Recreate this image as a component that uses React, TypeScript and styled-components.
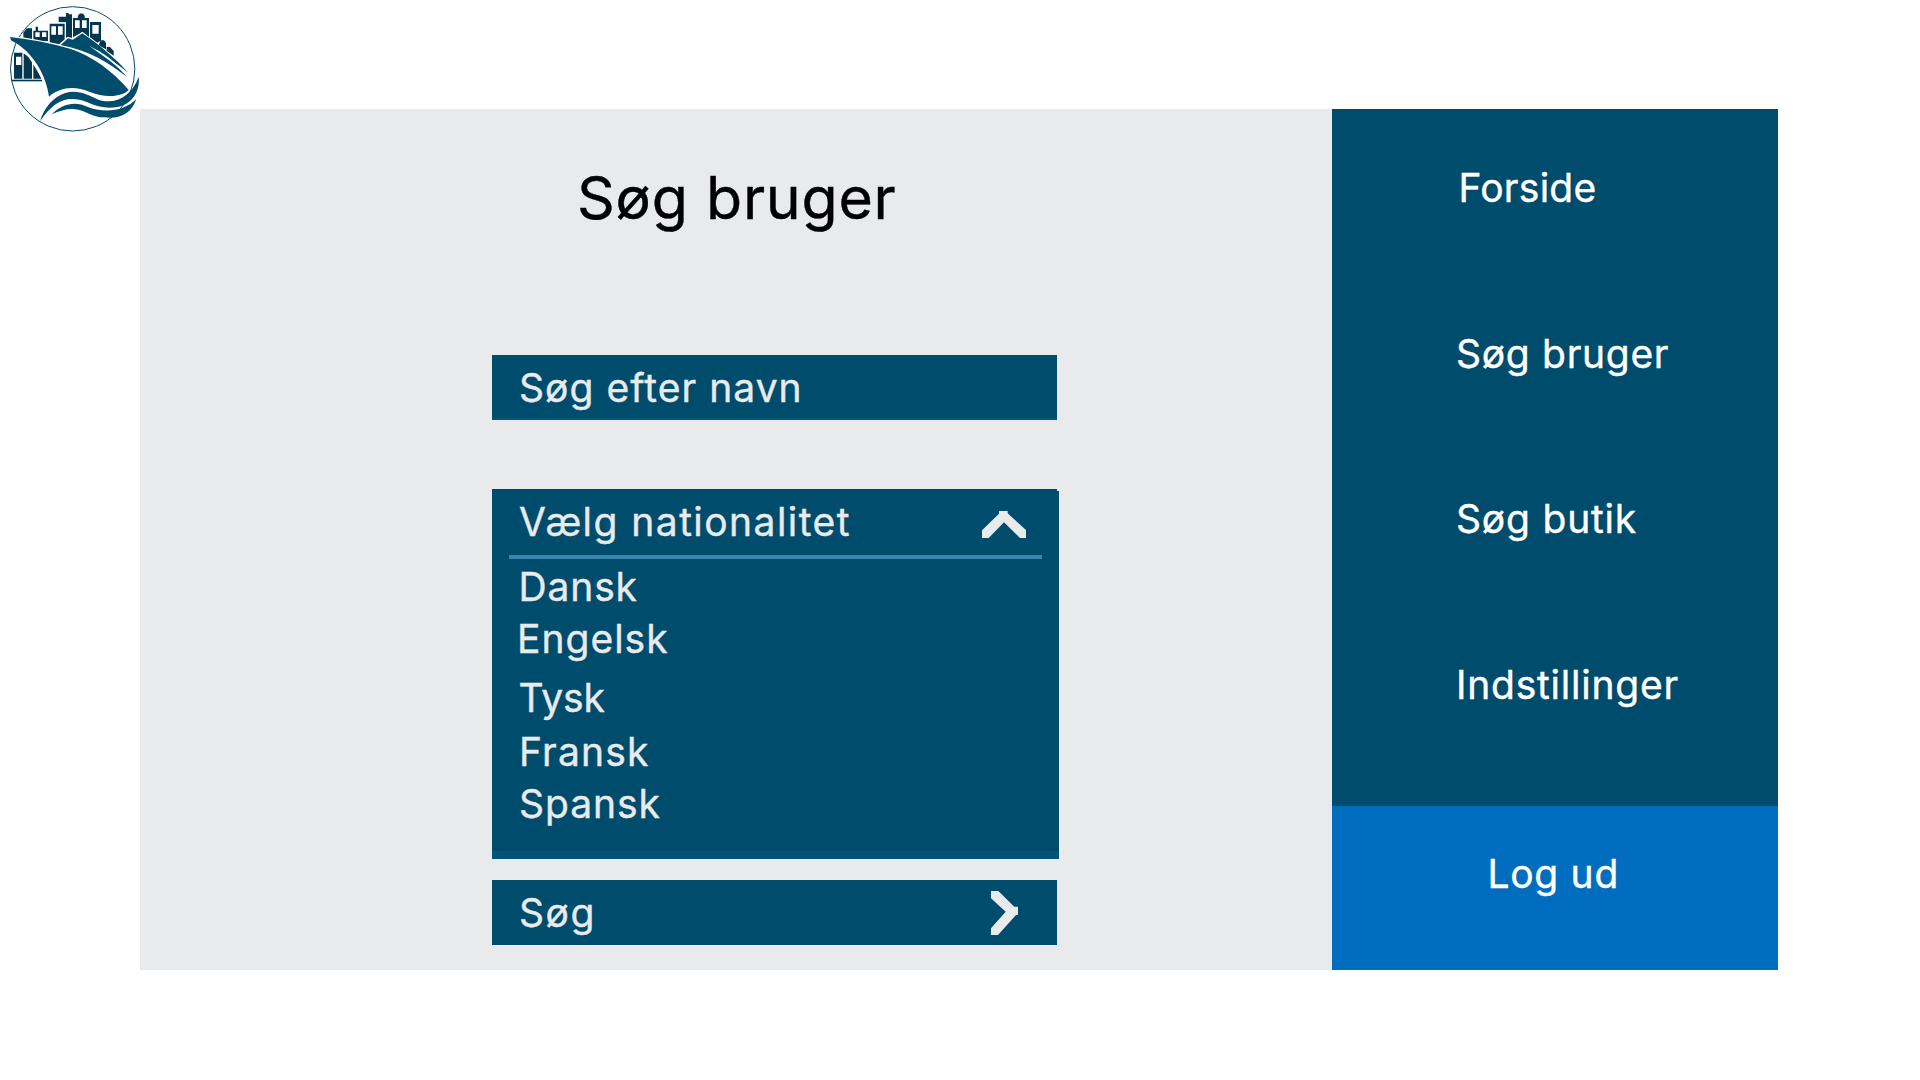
import React from 'react';
import styled, { createGlobalStyle } from 'styled-components';

const NAVY = '#004c6d';
const DARK = '#04364f';
const PALE = '#e8eaec';

const Global = createGlobalStyle`
  html, body { margin: 0; background: #fff; }
  body {
    font-family: Inter, "Liberation Sans", sans-serif;
    font-size: 39px;
    overflow: hidden;
    -webkit-text-stroke: 0.4px currentColor;
  }
`;

const Page = styled.div`
  display: grid;
  grid-template-columns: 140px 1638px;
  grid-template-rows: 109px 861px;
  width: 1920px;
  height: 1080px;
`;

const LogoCell = styled.header`
  grid-row: 1 / span 2;
`;

const Frame = styled.div`
  grid-column: 2;
  grid-row: 2;
  display: flex;
`;

const Main = styled.main`
  width: 1192px;
  box-sizing: border-box;
  padding: 49px 0 0 352px;
  background: ${PALE};
`;

const Spaced = styled.span<{ $ls: number }>`
  letter-spacing: ${p => p.$ls}px;
  white-space: nowrap;
`;

const Title = styled.h1`
  margin: 0 0 117px 85px;
  font-size: 59px;
  line-height: 80px;
  font-weight: 400;
  color: #000;
`;

const Bar = styled.div`
  display: flex;
  align-items: center;
  width: 565px;
  height: 65px;
  box-sizing: border-box;
  padding-left: 27px;
  background: ${NAVY};
  color: ${PALE};
  line-height: 65px;
`;

const SearchField = styled(Bar)`
  margin-bottom: 69px;
  box-shadow: inset 0 -2px #07567a;
`;

const SubmitBar = styled(Bar)`
  justify-content: space-between;
  padding-right: 39px;
`;

const Dropdown = styled.section`
  display: flex;
  flex-direction: column;
  width: 567px;
  height: 370px;
  margin-bottom: 21px;
  background: linear-gradient(${PALE}, ${PALE}) top right / 2px 2px no-repeat ${NAVY};
  color: ${PALE};
`;

const DropdownHead = styled.div`
  display: flex;
  justify-content: space-between;
  height: 66px;
  padding: 0 33px 0 27px;
  line-height: 66px;
`;

const Divider = styled.div`
  height: 4px;
  margin: 0 17px;
  background: #3a86ae;
`;

const Options = styled.ul`
  flex: 1;
  margin: 0;
  padding: 3px 0 0 27px;
  list-style: none;
  border-bottom: 8px solid #045475;
`;

const Option = styled.li<{ $gap: number; $shift?: number }>`
  margin: ${p => p.$gap}px 0 0 ${p => p.$shift ?? 0}px;
  line-height: 50px;
`;

const UpIcon = styled.svg`
  margin-top: 22px;
`;

const Sidebar = styled.nav`
  display: flex;
  flex-direction: column;
  width: 446px;
  background: ${NAVY};
  color: #fff;
`;

const NavItem = styled.a<{ $left: number }>`
  height: 165.7px;
  box-sizing: border-box;
  padding: 54px 0 0 ${p => p.$left}px;
  line-height: 50px;
`;

const Logout = styled.a`
  height: 164px;
  margin-top: auto;
  box-sizing: border-box;
  padding: 43px 0 0 155.5px;
  background: #006dbf;
  line-height: 50px;
`;

function Logo() {
  return (
    <svg width="140" height="140" viewBox="0 0 420 420" aria-hidden="true">
      <circle cx="218" cy="206.500" r="186.500" fill="none" stroke={NAVY} strokeWidth="3" />
      <g fill={DARK}>
        <path d="M70 118V98L80 85H96V118Z" />
        <path d="M100 118V92H107V80H114V92H144V124H100Z" />
        <path d="M149 71H194V130L180 136L149 128Z" />
        <path d="M176 66V50H198V39H206V43H216V118L204 110L198 114V67Z" />
        <path d="M219 54H233Q234 41 244 40Q254 41 255 54H267V112L247 97L219 112Z" />
        <path d="M270 66H303V122L292 128L270 112Z" />
        <path d="M296 136L302 121H312L318 128V148Z" />
        <path d="M320 152V140L330 141L341 153V167Z" />
        <path d="M42 158H67V236H42ZM71 160L96 180V236H71ZM100 184L128 232V236H100Z" />
        <rect x="36" y="239" width="94" height="5" />
      </g>
      <path fill="#fff" d="M106 97H119V111H106ZM126 97H139V111H126ZM154 79H168V104H154ZM174 79H188V104H174ZM225 61H239V84H225ZM246 61H260V84H246ZM277 75H296V101H277ZM48 170H64V195H48Z" />
      <path
        d="M30 111C90 118 130 126 178 137L204 115L224 120L247 100L390 218M30 112Q75 142 96 180Q125 225 130 240L147 290"
        fill="none"
        stroke="#fff"
        strokeWidth="8"
        strokeLinejoin="round"
      />
      <g fill={NAVY}>
        <path d="M30 111C90 118 150 128 210 146C275 166 340 215 386 270L376 278C345 292 310 292 270 276C222 256 180 262 147 290C140 235 112 185 78 152Q55 132 33 121Z" />
        <path d="M182 135L204 115L232 124C290 145 340 185 382 232C330 190 270 152 182 135Z" />
        <path d="M214 122L247 100C300 135 345 175 385 218C335 178 280 145 214 122Z" />
        <path d="M120 364C133 322 160 290 196 279C235 268 265 286 295 299C345 315 395 290 416 230C421 270 400 305 365 318C330 328 295 322 262 307C200 282 160 305 120 364Z" />
        <path d="M155 343C185 312 225 302 262 320C310 340 372 335 409 297C396 335 370 353 330 353C300 353 285 350 262 339C225 320 195 325 155 343Z" />
      </g>
      <path d="M268 138C310 158 350 188 384 225C345 194 308 166 268 138Z" fill="#fff" />
    </svg>
  );
}

const NAV = [
  { label: 'Forside', left: 126.5, ls: 0.25 },
  { label: 'Søg bruger', left: 124, ls: 0.7 },
  { label: 'Søg butik', left: 124, ls: 0.8 },
  { label: 'Indstillinger', left: 124, ls: 0.77 },
];

const NATIONS = [
  { label: 'Dansk', gap: 0, ls: 0.85, shift: -0.5 },
  { label: 'Engelsk', gap: 2, ls: 1.0, shift: -2 },
  { label: 'Tysk', gap: 9, ls: -0.1, shift: -0.5 },
  { label: 'Fransk', gap: 4, ls: 1.2 },
  { label: 'Spansk', gap: 2, ls: 0.95 },
];

export default function App() {
  return (
    <Page>
      <Global />
      <LogoCell><Logo /></LogoCell>
      <Frame>
        <Main>
          <Title><Spaced $ls={0.75}>Søg bruger</Spaced></Title>
          <SearchField><Spaced $ls={1.03}>Søg efter navn</Spaced></SearchField>
          <Dropdown>
            <DropdownHead>
              <Spaced $ls={1.45}>Vælg nationalitet</Spaced>
              <UpIcon width="44" height="27" viewBox="0 0 132 81">
                <path fill={PALE} d="M0 58L51 8V0H77V7L132 57V81H114L66 34L20 81H0Z" />
              </UpIcon>
            </DropdownHead>
            <Divider />
            <Options>
              {NATIONS.map(n => (
                <Option key={n.label} $gap={n.gap} $shift={n.shift}>
                  <Spaced $ls={n.ls}>{n.label}</Spaced>
                </Option>
              ))}
            </Options>
          </Dropdown>
          <SubmitBar>
            <Spaced $ls={1.5}>Søg</Spaced>
            <svg width="27" height="44" viewBox="0 0 81 132">
              <path fill={PALE} d="M0 0H22L70 47H81V72H75L21 132H0V112L44 62L0 22Z" />
            </svg>
          </SubmitBar>
        </Main>
        <Sidebar>
          {NAV.map(n => (
            <NavItem key={n.label} $left={n.left}><Spaced $ls={n.ls}>{n.label}</Spaced></NavItem>
          ))}
          <Logout><Spaced $ls={0.7}>Log ud</Spaced></Logout>
        </Sidebar>
      </Frame>
    </Page>
  );
}
